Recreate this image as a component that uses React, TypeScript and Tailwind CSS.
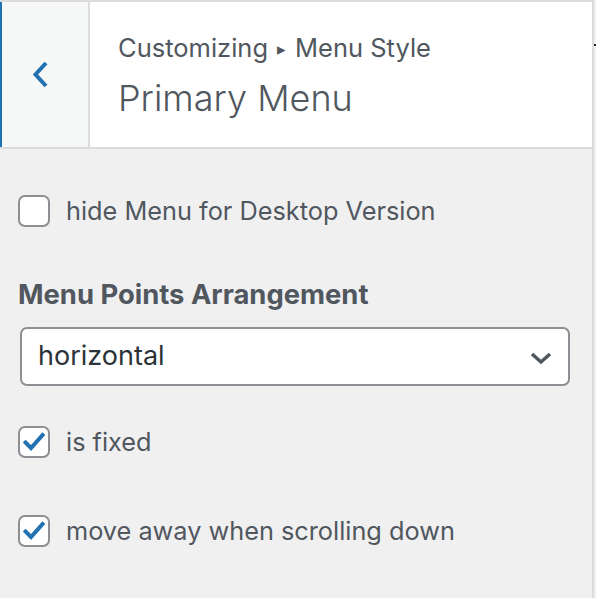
import { useState } from 'react';

type CheckRowProps = {
  label: string;
  checked: boolean;
  onToggle: () => void;
};

const CheckRow = ({ label, checked, onToggle }: CheckRowProps) => (
  <label className="flex items-center gap-4 cursor-pointer" onClick={onToggle}>
    <span className="flex h-8 w-8 shrink-0 items-center justify-center rounded-[7px] border-2 border-[#8c8f94] bg-white">
      {checked && (
        <svg width="22" height="20" viewBox="0 0 22 20" fill="none">
          <path d="M2.5 10.5 L8 16 L19.5 3" stroke="#2271b1" strokeWidth="4" strokeLinecap="square" />
        </svg>
      )}
    </span>
    <span className="text-[25.3px] leading-none text-[#50575e]">{label}</span>
  </label>
);

export default function App() {
  const [hideDesktop, setHideDesktop] = useState(false);
  const [fixed, setFixed] = useState(true);
  const [moveAway, setMoveAway] = useState(true);

  return (
    <div
      className="flex h-[598px] w-[596px] bg-[#f0f0f1]"
      style={{ fontFamily: 'Inter, "Noto Sans", sans-serif' }}
    >
      <div className="relative flex w-[594px] flex-col border-r-2 border-t-2 border-[#dcdcde]">
        {/* header */}
        <div className="flex h-[147px] border-b-2 border-[#dcdcde] bg-white">
          <button
            type="button"
            className="flex w-[90px] items-center justify-center border-l-2 border-r-2 border-l-[#2271b1] border-r-[#dcdcde] bg-[#f6f7f7] pr-[8px]"
          >
            <svg width="18" height="28" viewBox="0 0 18 28" fill="none">
              <path d="M14 2 L3.5 13.5 L14 25" stroke="#2271b1" strokeWidth="4" />
            </svg>
          </button>
          <div className="flex flex-col pl-[28px] pt-[32px]">
            <span className="text-[25.5px] leading-[28px] text-[#50575e]">
              Customizing
              <span className="mx-[9px] text-[17px] align-[2px]">▸</span>
              Menu Style
            </span>
            <span className="mt-[13px] text-[36px] font-light leading-[44px] text-[#50575e]">
              Primary Menu
            </span>
          </div>
        </div>
        <span className="absolute right-[-4px] top-[42px] h-[2px] w-[2px] bg-[#1d2327]" />

        {/* controls */}
        <div className="flex flex-col px-[18px] pt-[46px]">
          <CheckRow
            label="hide Menu for Desktop Version"
            checked={hideDesktop}
            onToggle={() => setHideDesktop(v => !v)}
          />

          <h3 className="mt-[52px] text-[27.4px] font-bold leading-[30px] text-[#50575e]">
            Menu Points Arrangement
          </h3>

          <div className="ml-[2px] mt-[18px] flex h-[59px] w-[550px] items-center justify-between rounded-[7px] border-2 border-[#8c8f94] bg-white pl-[16px] pr-[15px]">
            <span className="text-[27px] text-[#2c3338]">horizontal</span>
            <svg width="24" height="16" viewBox="0 0 24 16" fill="none" className="mt-[3px]">
              <path d="M3 4 L12 12 L21 4" stroke="#50575e" strokeWidth="3.5" />
            </svg>
          </div>

          <div className="mt-[40px]">
            <CheckRow label="is fixed" checked={fixed} onToggle={() => setFixed(v => !v)} />
          </div>
          <div className="mt-[57px]">
            <CheckRow
              label="move away when scrolling down"
              checked={moveAway}
              onToggle={() => setMoveAway(v => !v)}
            />
          </div>
        </div>
      </div>
    </div>
  );
}
